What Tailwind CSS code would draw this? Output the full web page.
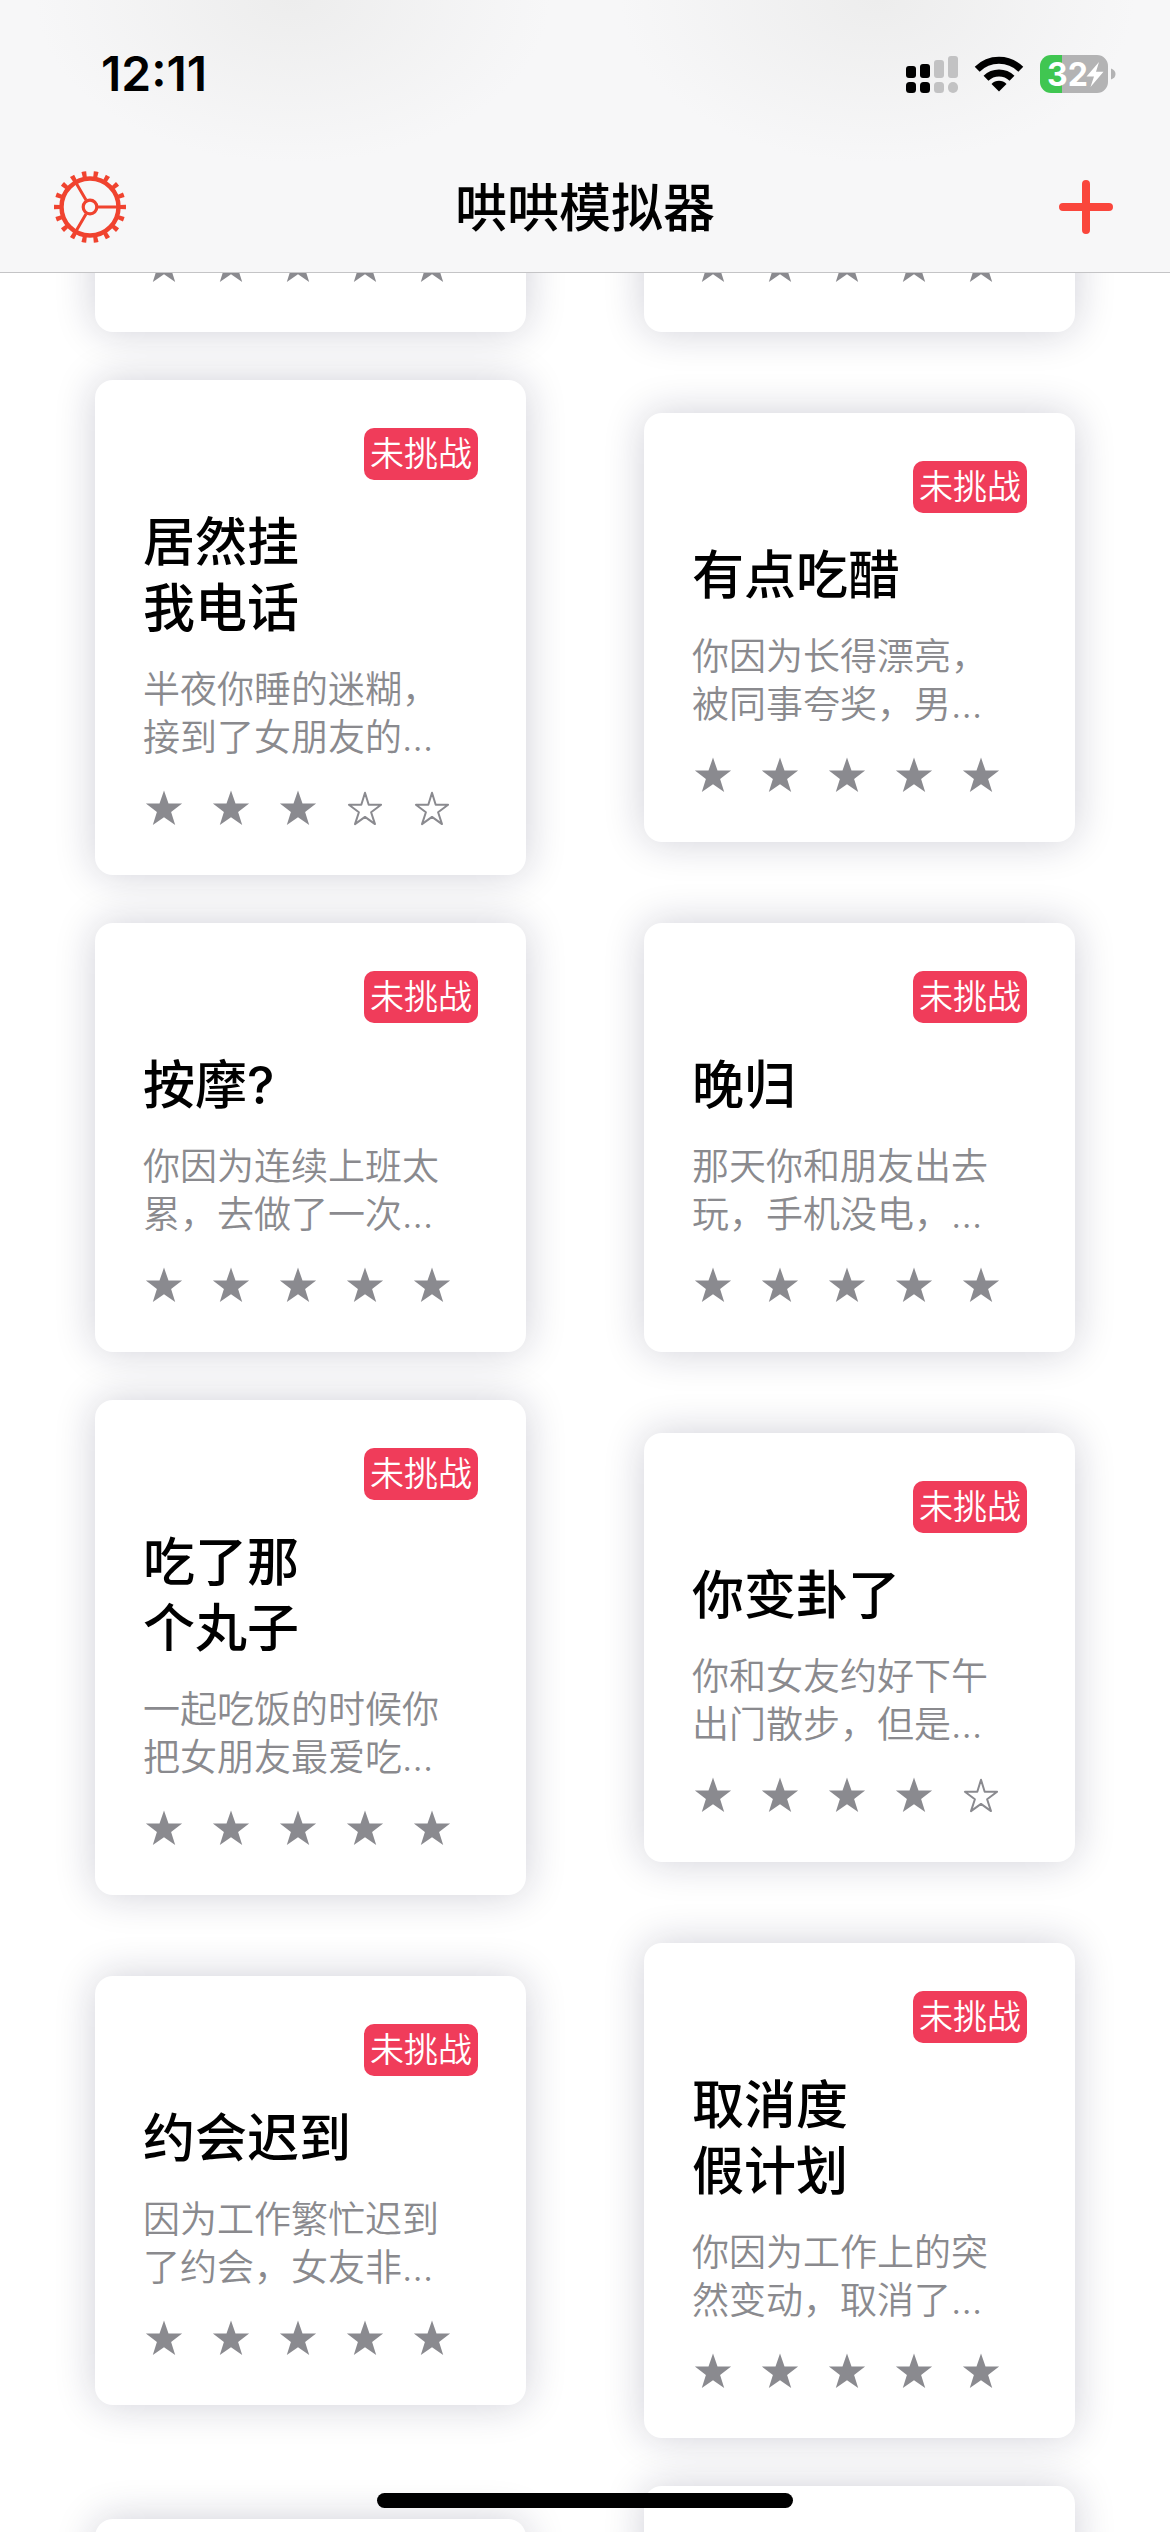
<!DOCTYPE html>
<html lang="zh-CN">
<head>
<meta charset="utf-8">
<meta name="viewport" content="width=device-width, initial-scale=1">
<title>哄哄模拟器</title>
<script src="https://cdn.jsdelivr.net/npm/@tailwindcss/browser@4"></script>
</head>
<body class="bg-white text-black font-[Inter,'Noto_Sans_CJK_SC',sans-serif]">
<svg class="hidden" aria-hidden="true">
  <symbol id="star-full" viewBox="0 0 42 43"><path fill="#8a8a8f" d="M21 6.600l4.500 13h13.600L28.100 28l4.100 13L21 33.200 9.800 41l4.100-13L2.900 19.600h13.600z"/></symbol>
  <symbol id="star-empty" viewBox="0 0 42 43"><path fill="none" stroke="#8a8a8f" stroke-width="2" stroke-linejoin="round" d="M21 8.800l3.700 12h12.400L27.100 28.200l3.900 11.900L21 32.900 11 40.100l3.900-11.900L4.900 20.800h12.400z"/></symbol>
</svg>

<div class="relative flex h-screen flex-col overflow-hidden">
  <header class="relative z-10 flex-none border-b border-[#c4c4c6] bg-[#f7f7f8] bg-[radial-gradient(ellipse_22%_60%_at_25%_0%,#ededed,transparent),radial-gradient(ellipse_22%_60%_at_75%_0%,#ededed,transparent)]">
    <div class="flex h-[148px] items-center justify-between pr-[54px] pl-[101px]">
      <time class="text-5xl leading-none font-semibold">12:11</time>
      <div class="flex items-center gap-4">
        <svg class="h-10 w-[52px]" viewBox="0 0 52 40" aria-label="信号">
          <g fill="#000"><rect x="0" y="12" width="10" height="12" rx="3"/><rect x="14" y="10" width="10" height="14" rx="3"/><rect x="0" y="28" width="10" height="11" rx="3.500"/><rect x="14" y="28" width="10" height="11" rx="3.500"/></g>
          <g fill="#c2c2c3"><rect x="28" y="6" width="10" height="18" rx="3"/><rect x="42" y="2" width="10" height="22" rx="3"/><rect x="28" y="28" width="10" height="11" rx="3.500"/><rect x="42" y="28" width="10" height="11" rx="5"/></g>
        </svg>
        <svg class="h-10 w-[50px]" viewBox="0 0 50 40" aria-label="无线网络">
          <g fill="none" stroke="#000" stroke-width="7"><path d="M3.200 15.300a31 31 0 0 1 43.600 0"/><path d="M12 24.300a18.500 18.500 0 0 1 26 0"/></g>
          <path d="M25 37.500l-7.500-7.600a10.600 10.600 0 0 1 15 0z"/>
        </svg>
        <svg class="h-10 w-[76px]" viewBox="0 0 76 40" aria-label="电量 32%，充电中">
          <path fill="#b3b3b4" d="M22 1h35a11 11 0 0 1 11 11v16a11 11 0 0 1-11 11H22zM71 14.500q4.500 1.500 4.500 5.500t-4.500 5.500z"/>
          <path fill="#40c651" d="M22 1H11A11 11 0 0 0 0 12v16a11 11 0 0 0 11 11h11z"/>
          <text x="7" y="31.500" class="fill-white text-[32px] font-bold">32</text>
          <path fill="#fff" d="M59 8L46.500 22.500H54L50.500 33 63.500 17.800H56z"/>
        </svg>
      </div>
    </div>
    <div class="grid h-[124px] grid-cols-[1fr_auto_1fr] items-center px-[54px] pb-[6px]">
      <button type="button" aria-label="设置" class="justify-self-start">
        <svg class="size-[72px]" viewBox="-36 -36 72 72" fill="none" stroke="#f0432f">
          <circle r="28.500" stroke-width="4.500"/>
          <circle r="33" stroke-width="6" pathLength="180" stroke-dasharray="3.800 6.200" stroke-dashoffset="1.900"/>
          <circle r="6.800" stroke-width="3.200"/>
          <path stroke-width="3" d="M8 0H29M-4 6.930L-14.500 25.100M-4-6.930L-14.500-25.100"/>
        </svg>
      </button>
      <h1 class="pt-1 text-[52px] leading-[66px] font-medium">哄哄模拟器</h1>
      <button type="button" aria-label="新建" class="justify-self-end">
        <svg class="h-[72px] w-[60px]" viewBox="0 0 60 72" fill="none" stroke="#fa463c" stroke-width="8" stroke-linecap="round"><path d="M30 13v46M7 36h46"/></svg>
      </button>
    </div>
  </header>

  <main class="min-h-0 flex-1 overflow-hidden">
    <div id="scenes" class="-mt-20 grid grid-cols-2 items-center gap-x-[118px] gap-y-12 px-[95px]"></div>
  </main>

  <div class="absolute bottom-6 left-1/2 z-20 h-[15px] w-[416px] -translate-x-1/2 rounded-full bg-black"></div>
</div>

<script>
  const scenes = [
    { stars: 5 },
    { stars: 5 },
    { title: ['居然挂', '我电话'], text: '半夜你睡的迷糊，接到了女朋友的…', stars: 3 },
    { title: ['有点吃醋'], text: '你因为长得漂亮，被同事夸奖，男…', stars: 5 },
    { title: ['按摩?'], text: '你因为连续上班太累，去做了一次…', stars: 5 },
    { title: ['晚归'], text: '那天你和朋友出去玩，手机没电，…', stars: 5 },
    { title: ['吃了那', '个丸子'], text: '一起吃饭的时候你把女朋友最爱吃…', stars: 5 },
    { title: ['你变卦了'], text: '你和女友约好下午出门散步，但是…', stars: 4 },
    { title: ['约会迟到'], text: '因为工作繁忙迟到了约会，女友非…', stars: 5 },
    { title: ['取消度', '假计划'], text: '你因为工作上的突然变动，取消了…', stars: 5 },
    { height: 'h-[429px]' },
    { height: 'h-[495px]' },
  ];

  const stars = n => `<div class="flex gap-[25px]" role="img" aria-label="难度 ${n} / 5">` +
    [1, 2, 3, 4, 5].map(i => `<svg class="h-[43px] w-[42px] flex-none"><use href="#${i <= n ? 'star-full' : 'star-empty'}"/></svg>`).join('') + '</div>';

  const details = s => `
    <span class="mb-[30px] self-end rounded-[10px] bg-[#f03c5a] px-[6px] text-[34px] leading-[52px] font-[350] text-white">未挑战</span>
    <h2 class="mb-6 text-[52px] leading-[66px] font-medium">${s.title.join('<br>')}</h2>
    <p class="mb-[22px] w-[300px] text-[37px] leading-[48px] font-[350] text-[#8a8a8e]">${s.text}</p>`;

  document.getElementById('scenes').innerHTML = scenes.map(s => `
    <a href="#" class="flex flex-col rounded-[18px] bg-white p-12 shadow-[0_0_40px_rgba(20,20,60,0.2)] ${s.height || ''}">
      ${s.title ? details(s) : ''}${s.stars ? stars(s.stars) : ''}
    </a>`).join('');
</script>
</body>
</html>
